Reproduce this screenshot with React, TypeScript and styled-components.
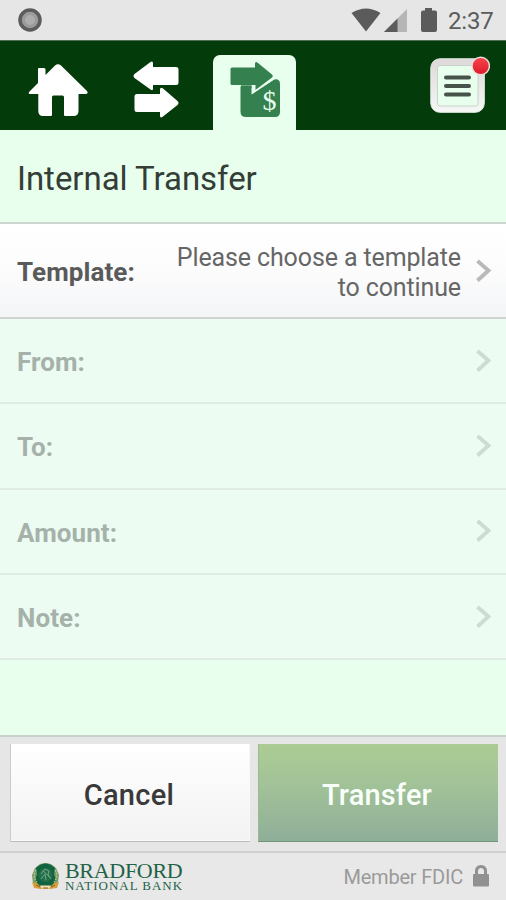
import React from "react";
import styled, { createGlobalStyle } from "styled-components";

const GlobalStyle = createGlobalStyle`
  * { box-sizing: border-box; }
  body { margin: 0; background: #e8ffee; font-family: Roboto, "Liberation Sans", sans-serif; }
  button { font-family: inherit; border: 0; padding: 0; background: none; }
`;

const Screen = styled.div`
  width: 506px;
  height: 900px;
  display: flex;
  flex-direction: column;
  overflow: hidden;
  background: #e8ffee;
`;

const StatusBar = styled.div`
  height: 40px;
  flex: none;
  display: flex;
  align-items: center;
  justify-content: space-between;
  padding: 0 12px 0 18px;
  background: #e6e6e6;
  svg { display: block; }
`;

const StatusIcons = styled.div`
  display: flex;
  align-items: center;
`;

const Clock = styled.span`
  margin-left: 11px;
  font-size: 24px;
  line-height: 40px;
  color: #5b5b5b;
  padding-top: 1px;
  width: 46px;
  letter-spacing: -0.15px;
`;

const NavBar = styled.nav`
  height: 90px;
  flex: none;
  display: flex;
  align-items: flex-end;
  background: #043b0b;
  border-top: 1px solid #506f50;
  padding-right: 16px;
`;

const NavItem = styled.button<{ $w: number; $active?: boolean }>`
  width: ${(p) => p.$w}px;
  height: 75px;
  border-radius: 7px 7px 0 0;
  background: ${(p) => (p.$active ? "#e8ffee" : "transparent")};
  svg { display: block; margin: 0 auto; }
`;

const NavGap = styled.div`
  width: 15px;
`;

const MenuButton = styled.button`
  width: 60px;
  height: 75px;
  margin-left: auto;
  svg { display: block; }
`;

const Title = styled.h1`
  height: 92px;
  flex: none;
  margin: 0;
  padding: 2px 17px 0;
  font-size: 33px;
  line-height: 94px;
  font-weight: 400;
  color: #353d37;
  letter-spacing: -0.04px;
`;

const Row = styled.div<{ $enabled?: boolean }>`
  height: ${(p) => (p.$enabled ? 97 : 85.3)}px;
  flex: none;
  display: flex;
  align-items: center;
  padding: 0 13px 0 17px;
  border-bottom: 2px solid ${(p) => (p.$enabled ? "#d0d4d3" : "#dfebe4")};
  border-top: ${(p) => (p.$enabled ? "2px solid #cbd6cf" : "0")};
  background: ${(p) => (p.$enabled ? "linear-gradient(#ffffff, #fdfdfd 40%, #f4f5f7)" : "#edfcf3")};
  color: ${(p) => (p.$enabled ? "#5a5a5a" : "#a5b2aa")};
  svg { display: block; flex: none; color: ${(p) => (p.$enabled ? "#b9b9bb" : "#cedbd3")}; }
`;

const Label = styled.span`
  font-size: 26px;
  font-weight: 700;
  line-height: 30px;
  padding-top: 3px;
  letter-spacing: 0.08px;
`;

const Value = styled.span`
  margin-left: auto;
  width: 300px;
  margin-right: 15px;
  text-align: right;
  font-size: 25px;
  line-height: 29.5px;
  padding-top: 4px;
  color: #666666;
  letter-spacing: -0.12px;
`;

const Spacer = styled.div`
  flex: 1;
`;

const Actions = styled.div`
  height: 116px;
  flex: none;
  display: grid;
  grid-template-columns: 240px 240px;
  gap: 8px;
  padding: 7px 8px 9px 10px;
  background: #e6e6e6;
  border-top: 2px solid #c8d2ca;
`;

const ActionButton = styled.button<{ $primary?: boolean }>`
  height: 98px;
  font-size: 29px;
  font-weight: 500;
  padding: 3px 2px 0 0;
  letter-spacing: ${(p) => (p.$primary ? 0.15 : 0.3)}px;
  color: ${(p) => (p.$primary ? "#f8fff8" : "#393939")};
  background: ${(p) => (p.$primary ? "linear-gradient(#accc94, #a4c498 35%, #8fae99)" : "linear-gradient(#ffffff, #f2f2f2)")};
  box-shadow: ${(p) =>
    p.$primary
      ? "inset 0 -1px #71977b, inset 1px 0 #9abb8d"
      : "inset 1px 0 #cbcbcb, inset 0 -1px #bcbcbc, inset -1px 0 #f8f8f8, inset 0 -2px #fafafa"};
`;

const Footer = styled.footer`
  height: 49px;
  flex: none;
  display: flex;
  align-items: center;
  padding: 0 16px 0 31px;
  background: #e8e8e8;
  border-top: 2px solid #d0d2d0;
  svg { display: block; }
`;

const BankName = styled.div`
  margin-left: 5px;
  width: 120px;
  font-family: "Liberation Serif", serif;
  color: #216347;
  white-space: nowrap;
`;

const BankTop = styled.div`
  font-size: 22px;
  line-height: 19px;
  letter-spacing: -0.3px;
`;

const BankBottom = styled.div`
  font-size: 13px;
  line-height: 12px;
  letter-spacing: 0.98px;
`;

const Member = styled.span`
  margin-left: auto;
  margin-right: 9px;
  padding-top: 1px;
  font-size: 20px;
  letter-spacing: -0.2px;
  color: #9a9a9a;
`;

const Chevron = () => (
  <svg width="17" height="24" viewBox="0 0 17 24" fill="none" stroke="currentColor" strokeWidth="3.8">
    <path d="M1.500 2 12.500 11.500 1.500 21.500" />
  </svg>
);

const HomeIcon = () => (
  <svg width="60" height="75" viewBox="28 55 60 75" fill="#fff">
    <path d="M38 83V69Q38 68 39 68H44Q45.5 68 45.5 69.5V75L55 65.5Q58 63 61 65.5L87 91Q89 94 85 94H78.500V111Q78.500 116 73.500 116H65Q64 116 64 115V97Q64 95.500 62.500 95.500H53.500Q52 95.500 52 97V115Q52 116 51 116H43Q38.300 116 38.300 111V94H30Q27.500 94 29.500 91.500Z" />
  </svg>
);

const TransferIcon = () => (
  <svg width="50" height="75" viewBox="132 55 50 75" fill="#fff">
    <path d="M134.500 74 150.500 62Q153 60.500 153 63.500V67H176Q178.500 67 178.500 69.500V82.500Q178.500 85 176 85H153V88.500Q153 91.500 150.500 89.500L134.500 78Q132.500 76 134.500 74Z" />
    <path d="M137 94H160V90Q160 86.500 163 88.500L177.500 101Q179.500 103 177.500 105L163 116.500Q160 119 160 115.500V112H137Q134.500 112 134.500 109.500V96.500Q134.500 94 137 94Z" />
  </svg>
);

const TemplateTransferIcon = () => (
  <svg width="54" height="75" viewBox="228 55 54 75" fill="#34804e">
    <path d="M240.500 86.500H251.500V94.500L274 79.500Q280 78.500 280 84V112Q280 117 275 117H246Q240.500 117 240.500 111.500Z" />
    <path d="M232 67.500H255V64Q255 60.500 258 63L272 74.500Q273.500 76 272 77.500L255.500 90V85H232Q230.500 85 230.500 83.500V69Q230.500 67.500 232 67.500Z" />
    <path d="M241 86H253V92.500L274.500 78.300" fill="none" stroke="#e8ffee" strokeWidth="1.500" />
    <path d="M241 85.300H251.600V88H241Z" />
    <text x="269.600" y="109.500" fontSize="28" fontFamily="Liberation Serif, serif" textAnchor="middle" fill="#e8ffee">$</text>
  </svg>
);

const MenuIcon = () => (
  <svg width="60" height="75" viewBox="430 55 60 75">
    <defs>
      <linearGradient id="menuFrame" x1="0" y1="0" x2="0" y2="1">
        <stop stopColor="#ddd8d9" />
        <stop offset="1" stopColor="#f5f8f5" />
      </linearGradient>
      <linearGradient id="badge" x1="0" y1="0" x2="0" y2="1">
        <stop stopColor="#f8444a" />
        <stop offset="1" stopColor="#dc1a2b" />
      </linearGradient>
    </defs>
    <rect x="430.800" y="58.800" width="53.500" height="53.500" rx="9" fill="url(#menuFrame)" stroke="#e9eeea" />
    <rect x="437.500" y="65.500" width="40.500" height="40.500" rx="2.500" fill="#e8ffee" stroke="#cbd2cd" />
    <path d="M446 77.400H469M446 86H469M446 94.600H469" stroke="#47524a" strokeWidth="4" strokeLinecap="round" />
    <circle cx="480.700" cy="66" r="8.700" fill="url(#badge)" stroke="#e9dfdd" strokeWidth="1.400" />
  </svg>
);

const Crest = () => (
  <svg width="29" height="29" viewBox="0 0 29 29">
    <path d="M14.500 1 20 2 25 6 28 13 27 20 23 26H6L2 21 1 13 4 6 9 2Z" fill="#789b65" />
    <path d="M5 6Q14.500-3 24 6L23 12 25 18 21 24H8L4 18 6 12Z" fill="#126340" />
    <circle cx="14.500" cy="13" r="7" fill="#226f4a" />
    <path d="M10 12 14 7 18 9 17 13 20 17M10 17 14 12 15 18M12 9 19 15" fill="none" stroke="#86b494" strokeWidth=".8" />
    <path d="M5 8Q1 14 6 20M24 8Q28 14 23 20" fill="none" stroke="#bac396" strokeWidth="1.200" strokeDasharray="2 1" />
    <path d="M1 20 6 21 9 24H20L23 21 28 20 26 26 19 27H10L3 26Z" fill="#d5a13e" />
    <path d="M9 23.500H20L18 26.500H11Z" fill="#f0e4b7" />
    <path d="M5 23 9 25M20 25 24 23M12 26H17" stroke="#9d5525" />
  </svg>
);

const FIELDS = ["From:", "To:", "Amount:", "Note:"];

export default function App() {
  return (
    <Screen>
      <GlobalStyle />
      <StatusBar>
        <svg width="24" height="24" viewBox="0 0 24 24">
          <circle cx="12" cy="12" r="10" fill="#9b9b9b" stroke="#5c5c5c" strokeWidth="3.500" />
          <circle cx="12" cy="12" r="5" fill="#adadad" />
        </svg>
        <StatusIcons>
          <svg width="86" height="40" viewBox="351 0 86 40">
            <path d="M351.500 13Q366 4 380.500 13L366 31.500Z" fill="#5b5b5b" />
            <path d="M384 32 407 9V32Z" fill="#b5b5b5" />
            <path d="M384 32 397.500 18.500V32Z" fill="#5b5b5b" />
            <path d="M425 8H432V10.500H435Q437 10.500 437 12.500V30Q437 32 435 32H423Q421 32 421 30V12.500Q421 10.500 423 10.500H425Z" fill="#5b5b5b" />
          </svg>
          <Clock>2:37</Clock>
        </StatusIcons>
      </StatusBar>
      <NavBar>
        <NavItem $w={116} aria-label="Home"><HomeIcon /></NavItem>
        <NavItem $w={82} aria-label="Transfers"><TransferIcon /></NavItem>
        <NavGap />
        <NavItem $w={83} $active aria-label="Template transfer"><TemplateTransferIcon /></NavItem>
        <MenuButton aria-label="Menu"><MenuIcon /></MenuButton>
      </NavBar>
      <Title>Internal Transfer</Title>
      <Row $enabled>
        <Label>Template:</Label>
        <Value>Please choose a template to continue</Value>
        <Chevron />
      </Row>
      {FIELDS.map((field) => (
        <Row key={field}>
          <Label>{field}</Label>
          <Spacer />
          <Chevron />
        </Row>
      ))}
      <Spacer />
      <Actions>
        <ActionButton>Cancel</ActionButton>
        <ActionButton $primary>Transfer</ActionButton>
      </Actions>
      <Footer>
        <Crest />
        <BankName>
          <BankTop>BRADFORD</BankTop>
          <BankBottom>NATIONAL BANK</BankBottom>
        </BankName>
        <Member>Member FDIC</Member>
        <svg width="18" height="25" viewBox="0 0 18 25">
          <path d="M4.500 11V7.500Q4.500 2.500 9 2.500T13.500 7.500V11" fill="none" stroke="#919191" strokeWidth="3" />
          <rect x="1" y="10" width="16" height="12.500" rx="1" fill="#919191" />
        </svg>
      </Footer>
    </Screen>
  );
}
